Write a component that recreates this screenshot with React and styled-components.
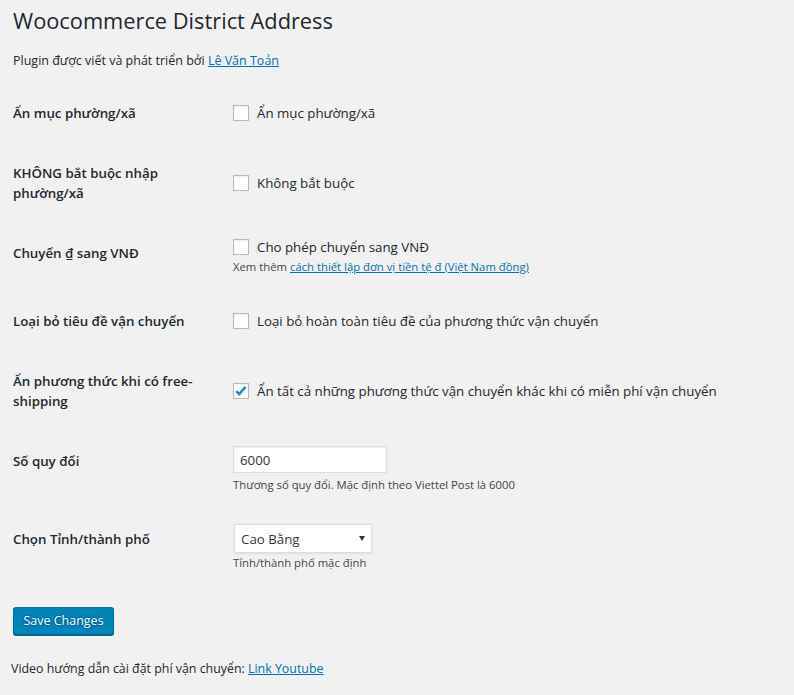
import React from "react";
import styled, { createGlobalStyle } from "styled-components";

const GlobalStyle = createGlobalStyle`
  html, body {
    margin: 0;
    background: #f1f1f1;
  }
  body {
    font-family: "Open Sans", "Noto Sans", "DejaVu Sans", sans-serif;
    color: #23282d;
    font-size: 13px;
  }
`;

const Wrap = styled.div`
  padding: 0 13px;
`;

const Title = styled.h1`
  margin: 0;
  padding: 6px 0 4px;
  font-size: 21.8px;
  line-height: 29px;
  font-weight: 400;
  color: #23282d;
`;

const Intro = styled.p`
  margin: 12px 0 13px;
  font-size: 12.5px;
  line-height: 19px;
`;

const Link = styled.a`
  color: #0073aa;
  text-decoration: underline;
  cursor: pointer;
`;

const FormTable = styled.div`
  display: flex;
  flex-direction: column;
`;

const Row = styled.div`
  display: flex;
`;

const Th = styled.div`
  align-self: flex-start;
  box-sizing: content-box;
  width: 200px;
  padding: 20px 10px 20px 0;
  font-size: 13.3px;
  font-weight: 600;
  line-height: 20px;
`;

const Td = styled.div`
  align-self: center;
  padding: 15px 10px;
  font-size: 13.3px;
  line-height: 18px;
`;

const CheckLine = styled.label`
  display: flex;
  align-items: center;
  gap: 8px;
  height: 18px;
  cursor: pointer;
`;

const Box = styled.span`
  box-sizing: border-box;
  display: flex;
  width: 16px;
  height: 16px;
  flex: none;
  border: 1px solid #b4b9be;
  background: #fff;
  box-shadow: inset 0 1px 2px rgba(0, 0, 0, 0.07);
`;

const Description = styled.p`
  margin: ${(p) => p.$gap || 2}px 0 0;
  font-size: 11.3px;
  line-height: 18px;
  color: #444;
`;

const TextInput = styled.input`
  display: block;
  box-sizing: border-box;
  width: 154px;
  height: 27px;
  margin: 0;
  padding: 0 6px;
  border: 1px solid #ddd;
  background: #fff;
  box-shadow: inset 0 1px 2px rgba(0, 0, 0, 0.07);
  font-family: inherit;
  font-size: 13.3px;
  color: #32373c;
  outline: none;
`;

const SelectWrap = styled.div`
  position: relative;
  width: 138px;
  height: 29px;
  margin-left: 1px;
  &::after {
    content: "";
    position: absolute;
    right: 7px;
    top: 12px;
    border-left: 3px solid transparent;
    border-right: 3px solid transparent;
    border-top: 5px solid #32373c;
    pointer-events: none;
  }
`;

const Select = styled.select`
  appearance: none;
  box-sizing: border-box;
  width: 100%;
  height: 100%;
  margin: 0;
  padding: 0 20px 0 6px;
  border: 1px solid #ddd;
  border-radius: 0;
  background: #fff;
  box-shadow: 0 1px 2px rgba(0, 0, 0, 0.07);
  font-family: inherit;
  font-size: 13.3px;
  color: #32373c;
  outline: none;
`;

const Submit = styled.div`
  padding-top: 20px;
`;

const Button = styled.button`
  box-sizing: border-box;
  width: 101px;
  height: 28px;
  padding: 0 4px 1px;
  white-space: nowrap;
  border: 1px solid #0073aa;
  border-color: #0073aa #006799 #006799;
  border-radius: 3px;
  background: #0085ba;
  box-shadow: 0 1px 0 #006799;
  color: #fff;
  font-family: inherit;
  font-size: 12.5px;
  text-shadow: 0 -1px 1px #006799, 1px 0 1px #006799, 0 1px 1px #006799,
    -1px 0 1px #006799;
  cursor: pointer;
`;

const Footer = styled.p`
  margin: 25px 0 0 -2px;
  font-size: 12.4px;
  line-height: 18px;
`;

function Check({ checked }) {
  return (
    <Box>
      {checked && (
        <svg width="14" height="14" viewBox="0 0 14 14">
          <path
            d="M2.2 7.2l3 3 6.3-7.4"
            fill="none"
            stroke="#1e8cbe"
            strokeWidth="2.6"
          />
        </svg>
      )}
    </Box>
  );
}

function CheckField({ label, checked }) {
  return (
    <CheckLine>
      <Check checked={checked} />
      <span>{label}</span>
    </CheckLine>
  );
}

export default function App() {
  return (
    <>
      <GlobalStyle />
      <Wrap>
        <Title>Woocommerce District Address</Title>
        <Intro>
          Plugin được viết và phát triển bởi <Link>Lê Văn Toản</Link>
        </Intro>
        <FormTable>
          <Row>
            <Th>Ẩn mục phường/xã</Th>
            <Td>
              <CheckField label="Ẩn mục phường/xã" />
            </Td>
          </Row>
          <Row>
            <Th>KHÔNG bắt buộc nhập phường/xã</Th>
            <Td>
              <CheckField label="Không bắt buộc" />
            </Td>
          </Row>
          <Row>
            <Th>Chuyển ₫ sang VNĐ</Th>
            <Td>
              <CheckField label="Cho phép chuyển sang VNĐ" />
              <Description>
                Xem thêm <Link>cách thiết lập đơn vị tiền tệ đ (Việt Nam đồng)</Link>
              </Description>
            </Td>
          </Row>
          <Row>
            <Th>Loại bỏ tiêu đề vận chuyển</Th>
            <Td>
              <CheckField label="Loại bỏ hoàn toàn tiêu đề của phương thức vận chuyển" />
            </Td>
          </Row>
          <Row>
            <Th>Ẩn phương thức khi có free-shipping</Th>
            <Td>
              <CheckField
                checked
                label="Ẩn tất cả những phương thức vận chuyển khác khi có miễn phí vận chuyển"
              />
            </Td>
          </Row>
          <Row>
            <Th>Số quy đổi</Th>
            <Td>
              <TextInput type="text" defaultValue="6000" />
              <Description $gap={3}>
                Thương số quy đổi. Mặc định theo Viettel Post là 6000
              </Description>
            </Td>
          </Row>
          <Row>
            <Th>Chọn Tỉnh/thành phố</Th>
            <Td>
              <SelectWrap>
                <Select defaultValue="cao-bang">
                  <option value="ha-noi">Hà Nội</option>
                  <option value="cao-bang">Cao Bằng</option>
                  <option value="ho-chi-minh">Hồ Chí Minh</option>
                </Select>
              </SelectWrap>
              <Description $gap={1}>Tỉnh/thành phố mặc định</Description>
            </Td>
          </Row>
        </FormTable>
        <Submit>
          <Button type="button">Save Changes</Button>
        </Submit>
        <Footer>
          Video hướng dẫn cài đặt phí vận chuyển: <Link>Link Youtube</Link>
        </Footer>
      </Wrap>
    </>
  );
}
